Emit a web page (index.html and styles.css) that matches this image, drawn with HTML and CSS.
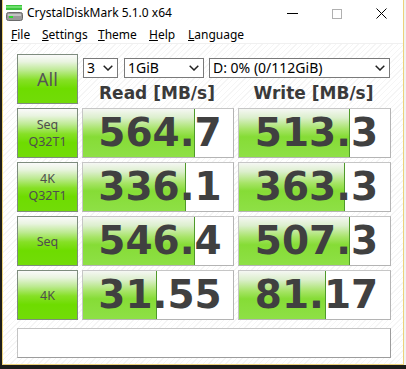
FILE: index.html
```html
<!DOCTYPE html>
<html>
<head>
  <meta charset="utf-8">
  <title>CrystalDiskMark 5.1.0 x64</title>
  <link rel="stylesheet" href="styles.css">
</head>
<body>
  <div class="screen">
    <div class="window">
      <div class="titlebar">
        <svg class="appIcon" width="17" height="16" viewBox="0 0 17 16">
          <rect x="0" y="0" width="16" height="5" fill="#3cc43c"/>
          <rect x="0" y="1" width="16" height="2" fill="#6ee06e"/>
          <rect x="0.5" y="7.5" width="16" height="8" rx="2" fill="#9a9a9a" stroke="#6a6a6a"/>
          <rect x="2" y="9" width="13" height="2" fill="#c4c4c4"/>
          <rect x="3" y="11" width="4" height="2" fill="#2ed82e"/>
        </svg>
        <span class="title">CrystalDiskMark 5.1.0 x64</span>
        <div class="captionBtns">
          <svg class="capMin" width="11" height="11" viewBox="0 0 11 11"><path d="M0 5.5h11" stroke="#000" stroke-width="1"/></svg>
          <svg class="capMax" width="10" height="10" viewBox="0 0 10 10"><rect x="0.5" y="0.5" width="9" height="9" fill="none" stroke="#b0b0b0"/></svg>
          <svg class="capClose" width="11" height="11" viewBox="0 0 11 11"><path d="M0.5 0.5l10 10M10.5 0.5l-10 10" stroke="#000" stroke-width="1"/></svg>
        </div>
      </div>
      <div class="menubar">
        <span class="menuItem m_file"><u>F</u>ile</span>
        <span class="menuItem m_settings"><u>S</u>ettings</span>
        <span class="menuItem m_theme"><u>T</u>heme</span>
        <span class="menuItem m_help"><u>H</u>elp</span>
        <span class="menuItem"><u>L</u>anguage</span>
      </div>
      <div class="client">
        <div class="grid">
          <div class="label labelAll">All</div>
          <div class="controls">
            <div class="selects">
              <div class="select sel_count"><span>3</span>
                <svg width="10" height="6" viewBox="0 0 10 6"><path d="M0.7 0.7L5 5L9.3 0.7" fill="none" stroke="#222" stroke-width="1.5"/></svg>
              </div>
              <div class="select sel_size"><span>1GiB</span>
                <svg width="10" height="6" viewBox="0 0 10 6"><path d="M0.7 0.7L5 5L9.3 0.7" fill="none" stroke="#222" stroke-width="1.5"/></svg>
              </div>
              <div class="select sel_drive"><span>D: 0% (0/112GiB)</span>
                <svg width="10" height="6" viewBox="0 0 10 6"><path d="M0.7 0.7L5 5L9.3 0.7" fill="none" stroke="#222" stroke-width="1.5"/></svg>
              </div>
            </div>
            <div class="headers">
              <div class="header headRead">Read [MB/s]</div>
              <div class="header headWrite">Write [MB/s]</div>
            </div>
          </div>

          <div class="label"><span>Seq</span><span>Q32T1</span></div>
          <div class="cell cellRead"><div class="bar" style="width: 74.7%"></div><span class="value">564.7</span></div>
          <div class="cell cellWrite"><div class="bar" style="width: 73.5%"></div><span class="value">513.3</span></div>

          <div class="label"><span>4K</span><span>Q32T1</span></div>
          <div class="cell cellRead"><div class="bar" style="width: 68.7%"></div><span class="value">336.1</span></div>
          <div class="cell cellWrite"><div class="bar" style="width: 70.2%"></div><span class="value">363.3</span></div>

          <div class="label"><span>Seq</span></div>
          <div class="cell cellRead"><div class="bar" style="width: 74.7%"></div><span class="value">546.4</span></div>
          <div class="cell cellWrite"><div class="bar" style="width: 73.5%"></div><span class="value">507.3</span></div>

          <div class="label"><span>4K</span></div>
          <div class="cell cellRead"><div class="bar" style="width: 49.3%"></div><span class="value">31.55</span></div>
          <div class="cell cellWrite"><div class="bar" style="width: 57.6%"></div><span class="value">81.17</span></div>
        </div>
        <div class="comment"></div>
      </div>
    </div>
    <div class="behind"></div>
  </div>
</body>
</html>
```

FILE: styles.css
```css
html, body {
  margin: 0;
  padding: 0;
}

body {
  background-color: #1d1d1b;
  font-family: "Noto Sans", "DejaVu Sans", sans-serif;
  color: #000000;
}

.screen {
  display: flex;
  flex-direction: row;
  align-items: flex-start;
  width: 406px;
  height: 369px;
  padding-left: 2px;
  box-sizing: border-box;
}

.window {
  box-sizing: border-box;
  width: 402px;
  height: 365px;
  border: 1px solid #ecd27a;
  border-top: none;
  background-color: #ffffff;
  display: flex;
  flex-direction: column;
}

.behind {
  width: 2px;
  height: 365px;
  background-color: #f2f2f2;
}

/* title bar */
.titlebar {
  display: flex;
  flex-direction: row;
  align-items: center;
  height: 25px;
  padding-left: 3px;
}
.appIcon {
  display: block;
}
.title {
  font-size: 12px;
  line-height: 25px;
  margin-left: 4px;
  color: #000000;
}
.captionBtns {
  display: flex;
  flex-direction: row;
  align-items: center;
  margin-left: auto;
  margin-right: 16px;
  margin-top: 2px;
}
.captionBtns svg {
  display: block;
}
.capMin {
  margin-right: 34px;
}
.capMax {
  margin-right: 34px;
}

/* menu */
.menubar {
  display: flex;
  flex-direction: row;
  height: 19px;
  padding-left: 8px;
  font-size: 12px;
  line-height: 19px;
}
.menuItem {
  display: inline-block;
}
.m_file { width: 31px; }
.m_settings { width: 56px; }
.m_theme { width: 51px; }
.m_help { width: 39px; }

/* client area */
.client {
  flex: 1;
  padding: 10px 0 0 14px;
  background: repeating-linear-gradient(135deg, #ffffff 0px, #ffffff 3px, #f5f5f5 3px, #f5f5f5 4px);
  border-top: 1px solid #f0f0f0;
  margin-top: -1px;
}

.grid {
  display: grid;
  grid-template-columns: 61px 152px 153px;
  grid-auto-rows: 50px;
  column-gap: 4px;
  row-gap: 4px;
}

.label {
  box-sizing: border-box;
  border: 1px solid #7e8c7e;
  background: linear-gradient(to bottom, #fafafa 0%, #e9f4e0 14%, #bdea92 32%, #86e026 52%, #6edc00 70%, #72dc08 100%);
  display: flex;
  flex-direction: column;
  align-items: center;
  justify-content: center;
  text-align: center;
  font-size: 12.5px;
  line-height: 17px;
  color: #4e4e4e;
}
.label span {
  display: block;
  height: 17px;
}
.labelAll {
  font-size: 18px;
  color: #555555;
}

.controls {
  grid-column: 2 / 4;
  display: flex;
  flex-direction: column;
}
.selects {
  display: flex;
  flex-direction: row;
  margin-top: 4px;
  margin-left: 1px;
}
.select {
  box-sizing: border-box;
  height: 20px;
  border: 1px solid #7a7a7a;
  background-color: #ffffff;
  display: flex;
  flex-direction: row;
  align-items: center;
  padding: 0 4px 0 3px;
  font-size: 14px;
  line-height: 18px;
  color: #000000;
}
.select svg {
  margin-left: auto;
  display: block;
}
.sel_count {
  width: 35px;
  margin-right: 6px;
}
.sel_size {
  width: 80px;
  margin-right: 5px;
}
.sel_drive {
  width: 181px;
}

.headers {
  display: grid;
  grid-template-columns: 152px 153px;
  column-gap: 4px;
  margin-top: 5px;
  margin-left: -1px;
}
.header {
  text-align: center;
  font-family: "DejaVu Sans", sans-serif;
  font-weight: bold;
  font-size: 17px;
  line-height: 20px;
  color: #3a3a3a;
}

.cell {
  box-sizing: border-box;
  position: relative;
  border: 1px solid #c6c6c6;
  border-right-color: #b4b4b4;
  border-bottom-color: #b4b4b4;
  background-color: #ffffff;
  overflow: hidden;
}
.bar {
  position: absolute;
  left: 0;
  top: 0;
  bottom: 0;
  box-sizing: border-box;
  border-right: 1px solid #4f9a2a;
  background: linear-gradient(to bottom, #f5f7f3 0%, #dcefcd 18%, #a6e466 42%, #86dc36 58%, #8ee046 100%);
}
.value {
  position: relative;
  display: block;
  text-align: center;
  padding-left: 4px;
  font-family: "DejaVu Sans", sans-serif;
  font-weight: bold;
  font-size: 39px;
  line-height: 48px;
  color: #404040;
}

.comment {
  box-sizing: border-box;
  width: 374px;
  height: 30px;
  margin-top: 8px;
  border: 1px solid #c4c4c4;
  border-right-color: #9c9c9c;
  border-bottom-color: #9c9c9c;
  background-color: #ffffff;
}
```
